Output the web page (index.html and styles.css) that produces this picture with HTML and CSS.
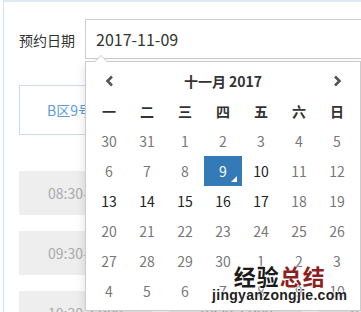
FILE: index.html
```html
<!DOCTYPE html>
<html lang="zh-CN">
<head>
    <meta charset="UTF-8">
    <meta name="viewport" content="width=device-width, initial-scale=1.0">
    <title>预约日期</title>
    <link rel="stylesheet" href="styles.css">
</head>
<body>
    <div class="page">
        <div class="form-row">
            <label class="label">预约日期</label>
            <div class="picker">
                <div class="date-input">2017-11-09</div>

                <div class="dropdown">
                    <div class="cal-head">
                        <span class="nav">
                            <svg width="9" height="12" viewBox="0 0 9 12"><polyline points="7,1.5 2.5,6 7,10.5" fill="none" stroke="#555" stroke-width="2.6"/></svg>
                        </span>
                        <span class="month">十一月 2017</span>
                        <span class="nav">
                            <svg width="9" height="12" viewBox="0 0 9 12"><polyline points="2,1.5 6.5,6 2,10.5" fill="none" stroke="#555" stroke-width="2.6"/></svg>
                        </span>
                    </div>
                    <div class="cal-grid">
                        <span class="dow">一</span><span class="dow">二</span><span class="dow">三</span><span class="dow">四</span><span class="dow">五</span><span class="dow">六</span><span class="dow">日</span>

                        <span class="day off">30</span><span class="day off">31</span><span class="day off">1</span><span class="day off">2</span><span class="day off">3</span><span class="day off">4</span><span class="day off">5</span>
                        <span class="day off">6</span><span class="day off">7</span><span class="day off">8</span><span class="day active">9</span><span class="day">10</span><span class="day off">11</span><span class="day off">12</span>
                        <span class="day">13</span><span class="day">14</span><span class="day">15</span><span class="day">16</span><span class="day">17</span><span class="day off">18</span><span class="day off">19</span>
                        <span class="day off">20</span><span class="day off">21</span><span class="day off">22</span><span class="day off">23</span><span class="day off">24</span><span class="day off">25</span><span class="day off">26</span>
                        <span class="day off">27</span><span class="day off">28</span><span class="day off">29</span><span class="day off">30</span><span class="day off">1</span><span class="day off">2</span><span class="day off">3</span>
                        <span class="day off">4</span><span class="day off">5</span><span class="day off">6</span><span class="day off">7</span><span class="day off">8</span><span class="day off">9</span><span class="day off">10</span>
                    </div>
                </div>
            </div>
        </div>

        <div class="area-box">B区9号工位</div>

        <div class="slots">
            <div class="slot">08:30-09:00</div>
            <div class="slot">08:30-09:00</div>
            <div class="slot">08:30-09:00</div>
            <div class="slot">09:30-10:00</div>
            <div class="slot">09:30-10:00</div>
            <div class="slot">09:30-10:00</div>
            <div class="slot">10:30-11:00</div>
            <div class="slot">10:30-11:00</div>
            <div class="slot">10:30-11:00</div>
        </div>

        <div class="watermark">
            <div class="wm-title">经验<span class="wm-red">总结</span></div>
            <div class="wm-url">jingyanzongjie.com</div>
        </div>
    </div>
</body>
</html>
```

FILE: styles.css
```css
html, body {
    margin: 0;
    height: 100%;
    overflow: hidden;
}

body {
    font-family: "Noto Sans CJK SC", "Noto Sans", sans-serif;
    color: #333;
    background: #fff;
}

.page {
    position: relative;
    margin-left: 3px;
    height: 100%;
    border-left: 1px solid #d5e4f1;
    border-top: 2px solid #dde9f5;
    box-sizing: border-box;
}

.form-row {
    display: flex;
    align-items: center;
    padding: 16px 0 0 15px;
}

.label {
    flex: none;
    width: 66px;
    white-space: nowrap;
    font-size: 14px;
    line-height: 40px;
    padding-top: 2px;
}

.picker {
    flex: none;
    position: relative;
}

.date-input {
    width: 300px;
    height: 40px;
    box-sizing: border-box;
    border: 1px solid #ccc;
    padding-left: 10px;
    font-size: 16px;
    line-height: 38px;
    color: #333;
}

.dropdown {
    position: absolute;
    top: 42px;
    left: 0;
    z-index: 5;
    width: 276px;
    box-sizing: border-box;
    padding: 4px;
    background: #fff;
    border: 1px solid #ccc;
    box-shadow: 0 4px 10px rgba(0,0,0,0.12);
}

.dropdown:before {
    content: "";
    position: absolute;
    top: -7px;
    left: 8px;
    border-left: 7px solid transparent;
    border-right: 7px solid transparent;
    border-bottom: 7px solid #ccc;
}

.dropdown:after {
    content: "";
    position: absolute;
    top: -6px;
    left: 9px;
    border-left: 6px solid transparent;
    border-right: 6px solid transparent;
    border-bottom: 6px solid #fff;
}

.cal-head {
    display: grid;
    grid-template-columns: 38px 1fr 38px;
    height: 30px;
    align-items: center;
    text-align: center;
}

.nav {
    display: flex;
    justify-content: center;
    align-items: center;
}

.month {
    font-weight: bold;
    font-size: 14px;
}

.cal-grid {
    display: grid;
    grid-template-columns: repeat(7, 38px);
    grid-auto-rows: 30px;
}

.dow, .day {
    display: flex;
    align-items: center;
    justify-content: center;
    font-size: 14px;
}

.dow {
    font-weight: bold;
    color: #333;
}

.day {
    color: #222;
}

.day.off {
    color: #777;
}

.day.active {
    position: relative;
    background: #337ab7;
    color: #fff;
}

.day.active:after {
    content: "";
    position: absolute;
    right: 5px;
    bottom: 4px;
    border-left: 6px solid transparent;
    border-bottom: 6px solid #fff;
}

.area-box {
    margin: 25px 0 0 15px;
    width: 300px;
    height: 50px;
    box-sizing: border-box;
    border: 1px solid #c8dcee;
    padding-left: 27px;
    line-height: 48px;
    font-size: 14px;
    color: #5d9cd6;
}

.slots {
    display: grid;
    grid-template-columns: repeat(3, 133px);
    column-gap: 17px;
    row-gap: 16px;
    margin: 36px 0 0 15px;
}

.slot {
    height: 44px;
    background: #eee;
    padding-left: 29px;
    line-height: 44px;
    font-size: 14px;
    color: #aaa;
    white-space: nowrap;
}

.watermark {
    position: absolute;
    left: 208px;
    top: 260px;
    z-index: 10;
    text-align: center;
    text-shadow: 0 0 2px #fff, 0 0 2px #fff, 0 0 3px #fff;
}

.wm-title {
    font-size: 22px;
    font-weight: bold;
    line-height: 26px;
    color: #1a1a1a;
    letter-spacing: 1px;
}

.wm-red {
    color: #8e1f1f;
}

.wm-url {
    font-family: "Liberation Sans", Arial, sans-serif;
    font-size: 14px;
    font-weight: bold;
    line-height: 14px;
    color: #222;
    letter-spacing: 0.3px;
}
```
